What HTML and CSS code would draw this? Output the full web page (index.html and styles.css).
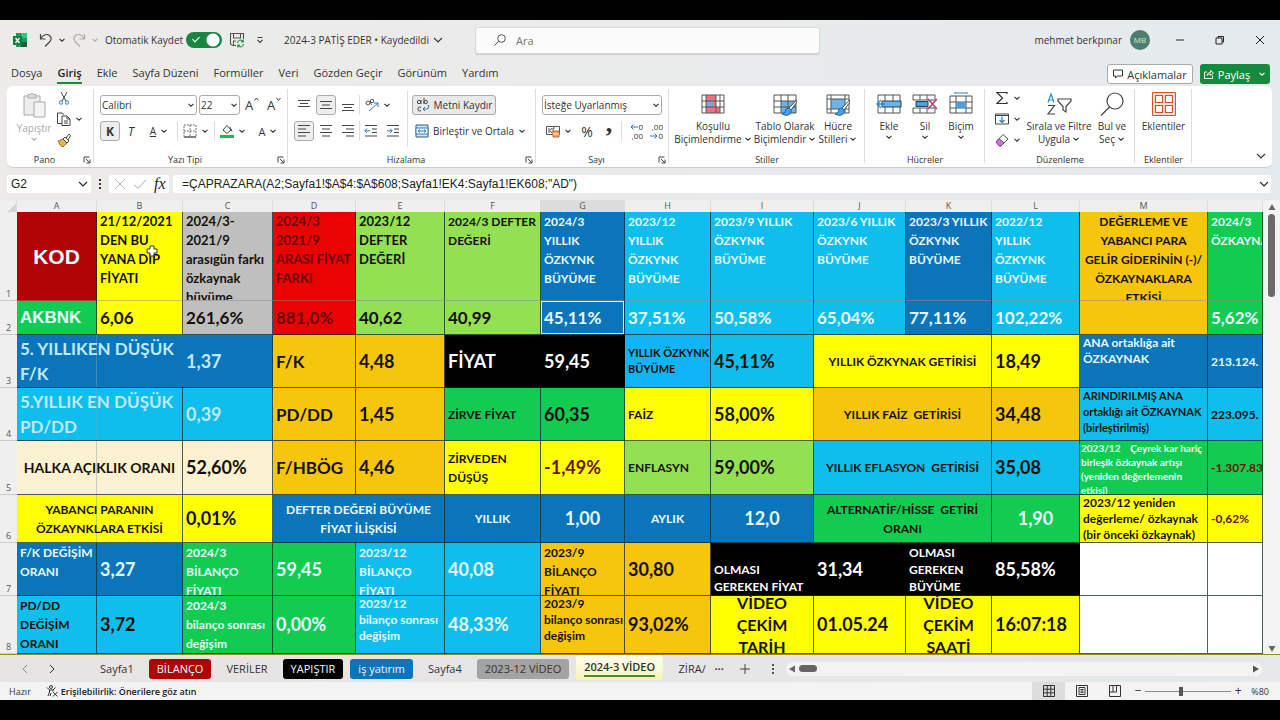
FILE: index.html
```html
<!DOCTYPE html>
<html lang="tr">
<head>
<meta charset="utf-8">
<title>2024-3 PATİŞ EDER</title>
<link rel="stylesheet" href="styles.css">
</head>
<body>
<svg class="defs" aria-hidden="true">
  <symbol id="chev" viewBox="0 0 8 8"><path d="M1.5 2.8 4 5.2 6.500 2.800" fill="none" stroke="currentColor" stroke-width="1.1"/></symbol>
  <symbol id="chevL" viewBox="0 0 10 10"><path d="M1 3l4 4 4-4" fill="none" stroke="currentColor" stroke-width="1.100"/></symbol>
  <symbol id="launch" viewBox="0 0 8 8"><path d="M1 6.500V1h5.500M3 3l4 4M7 3.500V7H3.500" fill="none" stroke="#444" stroke-width="1"/></symbol>
</svg>

<div class="app">
<header class="titlebar">
  <svg class="i16" viewBox="0 0 16 16"><path d="M4 1h11v14H4z" fill="#1f9a5a"/><path d="M9 1h6v5H9z" fill="#33c481"/><path d="M9 10h6v5H9z" fill="#14633a"/><path d="M1 4h9v9H1z" fill="#107c41"/><path d="M3.500 6l4 5M7.500 6l-4 5" stroke="#fff" stroke-width="1.300"/></svg>
  <button class="ib undo" aria-label="Geri al"><svg class="i16" viewBox="0 0 16 16"><path d="M2.500 2v5h5M2.800 6.500C5 2.500 9 1.500 11.500 3.500c3 2.500 1.500 5-.5 7L7 14.500" fill="none" stroke="#444" stroke-width="1.200"/></svg><svg class="i8"><use href="#chev"/></svg></button>
  <button class="ib faded redo" aria-label="Yinele"><svg class="i16" viewBox="0 0 16 16"><path d="M13.500 2v5h-5M13.200 6.500C11 2.500 7 1.500 4.500 3.500c-3 2.500-1.500 5 .5 7L9 14.500" fill="none" stroke="#aaa" stroke-width="1.200"/></svg><svg class="i8"><use href="#chev"/></svg></button>
  <label class="autosave">Otomatik Kaydet <input type="checkbox" class="switch" checked></label>
  <button class="ib save" aria-label="Kaydet"><svg class="i16" viewBox="0 0 16 16"><path d="M7 13.500H3.500L1.500 12V1.500h13V7M4.500 1.500V6h7V1.500M4.500 13.500V9H7" fill="none" stroke="#555" stroke-width="1.100"/><path d="M8.500 11a3 3 0 0 1 5.500-1.500M14.300 7.500v2.300H12M14.500 12A3 3 0 0 1 9 13.500M8.700 15.500v-2.300H11" fill="none" stroke="#2a9a50" stroke-width="1.200"/></svg></button>
  <button class="ib qat" aria-label="Araç çubuğunu özelleştir"><svg class="i8" viewBox="0 0 8 8"><path d="M1.500 1.500h5M1.500 4 4 6.500 6.500 4" fill="none" stroke="#444" stroke-width="1.100"/></svg></button>
  <button class="ib docname">2024-3 PATİŞ EDER • Kaydedildi <svg class="i10"><use href="#chevL"/></svg></button>
  <label class="search"><svg class="i12" viewBox="0 0 12 12"><circle cx="7.500" cy="4.500" r="3.800" fill="none" stroke="#555"/><path d="M4.800 7.200.5 11.500" stroke="#555"/></svg><input type="text" placeholder="Ara" aria-label="Ara"></label>
  <div class="user">mehmet berkpınar <span class="avatar">MB</span></div>
  <button class="ib win" aria-label="Simge durumuna küçült"><svg class="i10" viewBox="0 0 10 10"><path d="M1 5h8" stroke="#222"/></svg></button>
  <button class="ib win" aria-label="Geri yükle"><svg class="i10" viewBox="0 0 10 10"><path d="M1 3h6v6H1zM3 3V1.500h5.500V7H7" fill="none" stroke="#222"/></svg></button>
  <button class="ib win" aria-label="Kapat"><svg class="i10" viewBox="0 0 10 10"><path d="M1 1l8 8M9 1 1 9" stroke="#222"/></svg></button>
</header>

<nav class="tabs">
  <a href="#">Dosya</a><a href="#" class="on">Giriş</a><a href="#">Ekle</a><a href="#">Sayfa Düzeni</a><a href="#">Formüller</a><a href="#">Veri</a><a href="#">Gözden Geçir</a><a href="#">Görünüm</a><a href="#">Yardım</a>
  <button class="comments"><svg class="i10" viewBox="0 0 10 10"><path d="M.5 1h9v6H4.500L2.500 9V7h-2z" fill="none" stroke="#333"/></svg>Açıklamalar</button>
  <button class="share"><svg class="i10" viewBox="0 0 10 10"><path d="M3 3H.5v6.500h8V6.500M3 6.500c.3-2 1.500-3 3.500-3V1.500L9.500 4 6.500 6.300V5C5 5 4 5.500 3 6.500z" fill="none" stroke="#fff" stroke-width=".9"/></svg>Paylaş<svg class="i8"><use href="#chev"/></svg></button>
</nav>

<section class="ribbon">
  <div class="grp g-pano">
    <div class="body">
      <button class="big faded"><svg class="paste" viewBox="0 0 24 26"><path d="M2 4h16v19H2z" fill="#eee" stroke="#aaa"/><path d="M6 2.500h2.500Q10 0 11.500 2.500H14V6H6z" fill="#ddd" stroke="#aaa"/><path d="M12 10h11v15H12z" fill="#f4f4f4" stroke="#aaa"/></svg><span>Yapıştır</span><svg class="i8"><use href="#chev"/></svg></button>
      <div class="stack">
        <button class="ib" aria-label="Kes"><svg class="i14" viewBox="0 0 14 14"><path d="M4 1l5 9M10 1 5 10" stroke="#444" fill="none"/><circle cx="4" cy="11.500" r="1.700" fill="none" stroke="#2a7ab8"/><circle cx="10" cy="11.500" r="1.700" fill="none" stroke="#2a7ab8"/></svg></button>
        <button class="ib" aria-label="Kopyala"><svg class="i14" viewBox="0 0 14 14"><path d="M5 11.500H.5V1H5l2 1.500M5 4h5l3 3v6.500H5zM10 4v3h3M7 9h4M7 11h4" fill="none" stroke="#444"/></svg><svg class="i8"><use href="#chev"/></svg></button>
        <button class="ib" aria-label="Biçim boyacısı"><svg class="i14" viewBox="0 0 14 14"><path d="M1 8l5-2 4 4-4 4q-3-1-5-6z" fill="#f0b050" stroke="#a66a20"/><path d="M6 6l2-2 4 4-2 2zM9 5l3-4 1.500 1.500L11 7" fill="#fff" stroke="#444"/></svg></button>
      </div>
    </div>
    <div class="cap">Pano<svg class="i8"><use href="#launch"/></svg></div>
  </div>

  <div class="grp g-font">
    <div class="body rows">
      <div class="row">
        <span class="sel w97"><select aria-label="Yazı tipi"><option>Calibri</option></select><svg class="i8"><use href="#chev"/></svg></span>
        <span class="sel w41"><select aria-label="Yazı boyutu"><option>22</option></select><svg class="i8"><use href="#chev"/></svg></span>
        <button class="ib w22 lat" aria-label="Yazı tipini büyüt">A<svg class="i8 hat" viewBox="0 0 8 8"><path d="M1.500 4.500 3.500 2l2 2.500" fill="none" stroke="#444"/></svg></button>
        <button class="ib w22 lat" aria-label="Yazı tipini küçült">A<svg class="i8 hat" viewBox="0 0 8 8"><path d="M1.500 2l2 2.500 2-2.500" fill="none" stroke="#444"/></svg></button>
      </div>
      <div class="row">
        <button class="ib box bold">K</button>
        <button class="ib w22 ital">T</button>
        <button class="ib w34"><u>A</u><svg class="i8"><use href="#chev"/></svg></button>
        <i class="sep"></i>
        <button class="ib w34" aria-label="Kenarlıklar"><svg class="i14" viewBox="0 0 14 14"><path d="M1 1h12v12H1zM7 1v12M1 7h12" fill="none" stroke="#777" stroke-dasharray="2 1"/><path d="M1 13h12" stroke="#333"/></svg><svg class="i8"><use href="#chev"/></svg></button>
        <i class="sep"></i>
        <button class="ib w34" aria-label="Dolgu rengi"><svg class="i14" viewBox="0 0 14 14"><path d="M3 6l4-4.500L11 6l-4 3.500zM10 3l2 4.500" fill="none" stroke="#444"/><path d="M0 11h14v3H0z" fill="#1db954"/></svg><svg class="i8"><use href="#chev"/></svg></button>
        <button class="ib w34 fc">A<svg class="i8"><use href="#chev"/></svg></button>
      </div>
    </div>
    <div class="cap">Yazı Tipi<svg class="i8"><use href="#launch"/></svg></div>
  </div>

  <div class="grp g-align">
    <div class="body">
      <div class="rows">
        <div class="row">
          <button class="ib box ghost" aria-label="Üste hizala"><svg class="i14" viewBox="0 0 14 14"><path d="M1 2.500h12M3 5.500h8M1 8.500h12" stroke="#444"/></svg></button>
          <button class="ib box" aria-label="Ortaya hizala"><svg class="i14" viewBox="0 0 14 14"><path d="M1 3.500h12M3 7h8M1 10.500h12" stroke="#444"/></svg></button>
          <button class="ib box ghost" aria-label="Alta hizala"><svg class="i14" viewBox="0 0 14 14"><path d="M1 6.500h12M3 9.500h8M1 12.500h12" stroke="#444"/></svg></button>
          <i class="sep"></i>
          <button class="ib w34" aria-label="Yönlendirme"><svg class="i14" viewBox="0 0 14 14"><circle cx="3" cy="5" r="2" fill="none" stroke="#555"/><path d="M4 3l3 4" stroke="#555"/><circle cx="7" cy="3" r="1.700" fill="none" stroke="#555"/><path d="M4 13l9-8M13 9V5H9" stroke="#2a7ab8" fill="none"/></svg><svg class="i8"><use href="#chev"/></svg></button>
        </div>
        <div class="row">
          <button class="ib box" aria-label="Sola hizala"><svg class="i14" viewBox="0 0 14 14"><path d="M1 1.500h12M1 5h8M1 8.500h12M1 12h8" stroke="#444"/></svg></button>
          <button class="ib box ghost" aria-label="Ortala"><svg class="i14" viewBox="0 0 14 14"><path d="M1 1.500h12M3 5h8M1 8.500h12M3 12h8" stroke="#444"/></svg></button>
          <button class="ib box ghost" aria-label="Sağa hizala"><svg class="i14" viewBox="0 0 14 14"><path d="M1 1.500h12M5 5h8M1 8.500h12M5 12h8" stroke="#444"/></svg></button>
          <i class="sep"></i>
          <button class="ib box ghost" aria-label="Girintiyi azalt"><svg class="i14" viewBox="0 0 14 14"><path d="M1 1.500h12M8 5h5M8 8.500h5M1 12h12" stroke="#444"/><path d="M6 6.800H1M3 4.500.8 6.800 3 9" stroke="#2a7ab8" fill="none"/></svg></button>
          <button class="ib box ghost" aria-label="Girintiyi artır"><svg class="i14" viewBox="0 0 14 14"><path d="M1 1.500h12M8 5h5M8 8.500h5M1 12h12" stroke="#444"/><path d="M1 6.800h5M4 4.500l2.200 2.300L4 9" stroke="#2a7ab8" fill="none"/></svg></button>
        </div>
      </div>
      <i class="sep tall"></i>
      <div class="rows">
        <div class="row"><button class="ib box wide"><svg class="i14" viewBox="0 0 14 14"><circle cx="3" cy="4" r="1.700" fill="none" stroke="#444"/><path d="M5 2v4M8 0v6M5 9.500Q2 8 2 11t3 1.500" fill="none" stroke="#444"/><circle cx="9.700" cy="4" r="1.700" fill="none" stroke="#444"/><path d="M12.500 7v2q0 2-2 2H7M9 9l-2 2 2 2" stroke="#2a7ab8" fill="none"/></svg>Metni Kaydır</button></div>
        <div class="row"><button class="ib pad"><svg class="i14" viewBox="0 0 14 14"><path d="M1 1h12v12H1z" fill="#cfe6f5" stroke="#456"/><path d="M1 4h12v6H1z" fill="#fff" stroke="#2a7ab8"/><path d="M3 7h8M5 5.500 3 7l2 1.500M9 5.500 11 7 9 8.500" fill="none" stroke="#2a7ab8"/></svg>Birleştir ve Ortala<svg class="i8"><use href="#chev"/></svg></button></div>
      </div>
    </div>
    <div class="cap">Hizalama<svg class="i8"><use href="#launch"/></svg></div>
  </div>

  <div class="grp g-num">
    <div class="body rows">
      <div class="row"><span class="sel w120"><select aria-label="Sayı biçimi"><option>İsteğe Uyarlanmış</option></select><svg class="i8"><use href="#chev"/></svg></span></div>
      <div class="row">
        <button class="ib w34" aria-label="Finansal sayı biçimi"><svg class="i14" viewBox="0 0 14 14"><path d="M.5 2.500h13v8H.5z" fill="none" stroke="#555"/><path d="M3 4v5M6 4 4 6.500 6 9M9 4H7v5h2" stroke="#555" fill="none"/><path d="M7 7h6v6H7z" fill="#f0a060" stroke="#d06820"/><path d="M7 10h6" stroke="#fff"/></svg><svg class="i8"><use href="#chev"/></svg></button>
        <button class="ib w22 pct">%</button>
        <button class="ib w22 comma">,</button>
        <i class="sep"></i>
        <button class="ib dec" aria-label="Ondalık artır"><span class="up"><svg class="i8" viewBox="0 0 8 8"><path d="M8 4H1M3.500 1.500 1 4l2.500 2.500" fill="none" stroke="#2a7ab8"/></svg>0</span><span>,00</span></button>
        <button class="ib dec" aria-label="Ondalık azalt"><span>,00</span><span class="up"><svg class="i8" viewBox="0 0 8 8"><path d="M0 4h7M4.500 1.500 7 4 4.500 6.500" fill="none" stroke="#2a7ab8"/></svg>0</span></button>
      </div>
    </div>
    <div class="cap">Sayı<svg class="i8"><use href="#launch"/></svg></div>
  </div>

  <div class="grp g-style">
    <div class="body">
      <button class="big"><svg class="i24" viewBox="0 0 24 24"><path d="M1 3h22v18H1z" fill="#fff"/><path d="M5 3h10v6H5zM5 15h14v6H5z" fill="#f47080"/><path d="M5 9h7v6H5z" fill="#7aa8d8"/><path d="M12 9h3v6h-3z" fill="#f47080"/><path d="M1 3h22v18H1zM1 9h22M1 15h22M5 3v18M15 3v18M19 3v18" fill="none" stroke="#555"/></svg><span>Koşullu<br>Biçimlendirme<svg class="i8"><use href="#chev"/></svg></span></button>
      <button class="big"><svg class="i24" viewBox="0 0 24 24"><path d="M1 3h22v18H1z" fill="#fff"/><path d="M8 9h15v12H8z" fill="#6ab4ea"/><path d="M1 3h22v18H1zM1 9h22M1 15h22M8 3v18M15 3v18" fill="none" stroke="#555"/><path d="M23.500 8 16 16l2 2 6-8z" fill="#fff" stroke="#444"/><path d="M16 16q-4 0-4 4-1 2-3 2 5 3 8 0 2-2 1-4z" fill="#4aa0e0" stroke="#1f6ca8"/></svg><span>Tablo Olarak<br>Biçimlendir<svg class="i8"><use href="#chev"/></svg></span></button>
      <button class="big"><svg class="i24" viewBox="0 0 24 24"><path d="M1 3h22v18H1z" fill="#fff"/><path d="M5 7h14v10H5z" fill="#6ab4ea"/><path d="M1 3h22v18H1zM1 7h22M1 17h22M5 3v18M19 3v18" fill="none" stroke="#555"/><path d="M23.500 8 16 16l2 2 6-8z" fill="#fff" stroke="#444"/><path d="M16 16q-4 0-4 4-1 2-3 2 5 3 8 0 2-2 1-4z" fill="#4aa0e0" stroke="#1f6ca8"/></svg><span>Hücre<br>Stilleri<svg class="i8"><use href="#chev"/></svg></span></button>
    </div>
    <div class="cap">Stiller</div>
  </div>

  <div class="grp g-cells">
    <div class="body">
      <button class="big"><svg class="i26" viewBox="0 0 26 24"><path d="M2 3h22v18H2z" fill="#fff"/><path d="M2 3h22v18H2zM9 3v18M17 3v18" fill="none" stroke="#555"/><path d="M6 9h19v6H6z" fill="#6ab4ea" stroke="#245"/><path d="M9 12H1M5 8l-4 4 4 4" fill="none" stroke="#2f86c8" stroke-width="1.400"/></svg><span>Ekle</span><svg class="i8"><use href="#chev"/></svg></button>
      <button class="big"><svg class="i26" viewBox="0 0 26 24"><path d="M1 3h22v5H1zM1 16h22v5H1zM8 3v5M15 3v5M8 16v5M15 16v5" fill="#fff" stroke="#555"/><path d="M4 9.500h12v5H4z" fill="#4a9fe0" stroke="#245"/><path d="M16 7l9 10M25 7l-9 10" stroke="#b8326a" stroke-width="1.300"/></svg><span>Sil</span><svg class="i8"><use href="#chev"/></svg></button>
      <button class="big"><svg class="i26" viewBox="0 0 26 24"><path d="M7 1h12M7-1v3M19-1v3" stroke="#2f86c8"/><path d="M2 4h22v17H2zM2 10h22M2 16h22M8 4v17M18 4v17" fill="#fff" stroke="#555"/><path d="M8 10h10v6H8z" fill="#4a9fe0"/></svg><span>Biçim</span><svg class="i8"><use href="#chev"/></svg></button>
    </div>
    <div class="cap">Hücreler</div>
  </div>

  <div class="grp g-edit">
    <div class="body">
      <div class="stack">
        <button class="ib" aria-label="Otomatik toplam"><svg class="i14" viewBox="0 0 14 14"><path d="M12 3V1.500H2L7.500 7 2 12.500h10V11" fill="none" stroke="#333" stroke-width="1.200"/></svg><svg class="i8"><use href="#chev"/></svg></button>
        <button class="ib" aria-label="Dolgu"><svg class="i14" viewBox="0 0 14 14"><path d="M.5 2h13v10H.5zM.5 3.500h13" fill="none" stroke="#444"/><path d="M7 4.500V10M4.500 8 7 10.500 9.500 8" fill="none" stroke="#2a7ab8" stroke-width="1.200"/></svg><svg class="i8"><use href="#chev"/></svg></button>
        <button class="ib" aria-label="Temizle"><svg class="i14" viewBox="0 0 14 14"><path d="M1 9l7-7.500L13 6l-7 7H4.500z" fill="#fff" stroke="#555"/><path d="M1 9l3-3.500L9 10l-3 3H4.500z" fill="#c878d0" stroke="#8a3a98"/></svg><svg class="i8"><use href="#chev"/></svg></button>
      </div>
      <button class="big"><svg class="i26" viewBox="0 0 26 24"><path d="M2 10.500 5 2l3 8.500M3 8h4" fill="none" stroke="#2a8ac8" stroke-width="1.200"/><path d="M2 13.500h6.500L2 22h7" fill="none" stroke="#444" stroke-width="1.200"/><path d="M12 7h13v2l-5 5.500V20l-3-2v-3.500L12 9z" fill="none" stroke="#444" stroke-width="1.200"/></svg><span>Sırala ve Filtre<br>Uygula<svg class="i8"><use href="#chev"/></svg></span></button>
      <button class="big"><svg class="i26" viewBox="0 0 26 24"><circle cx="16" cy="9" r="8" fill="none" stroke="#444" stroke-width="1.200"/><path d="M10.500 15 2 23.500" stroke="#444" stroke-width="1.200"/></svg><span>Bul ve<br>Seç<svg class="i8"><use href="#chev"/></svg></span></button>
    </div>
    <div class="cap">Düzenleme</div>
  </div>

  <div class="grp g-add">
    <div class="body">
      <button class="big"><svg class="i26" viewBox="0 0 26 24"><path d="M1.500.5h23v23h-23z" fill="#fbe3da" stroke="#d2522c"/><path d="M4.500 3.500h7v7h-7zM14.500 3.500h7v7h-7zM4.500 13.500h7v7h-7zM14.500 13.500h7v7h-7z" fill="#fff" stroke="#d2522c" stroke-width="1.200"/></svg><span>Eklentiler</span></button>
    </div>
    <div class="cap">Eklentiler</div>
  </div>
  <button class="ib collapse" aria-label="Şeridi daralt"><svg class="i10"><use href="#chevL"/></svg></button>
</section>

<section class="fbar">
  <label class="namebox"><input type="text" value="G2" aria-label="Ad kutusu"><svg class="i10"><use href="#chevL"/></svg></label>
  <svg class="dots" viewBox="0 0 4 12"><path d="M1 1h2v2H1zM1 5h2v2H1zM1 9h2v2H1z" fill="#333"/></svg>
  <div class="fx"><svg class="i12" viewBox="0 0 12 12"><path d="M1 1l10 10M11 1 1 11" stroke="#bbb"/></svg><svg class="i12" viewBox="0 0 12 12"><path d="M0 6.500 4 10.500 12 2" stroke="#aaa" fill="none"/></svg><em>fx</em></div>
  <label class="formula"><input type="text" aria-label="Formül" value="=ÇAPRAZARA(A2;Sayfa1!$A$4:$A$608;Sayfa1!EK4:Sayfa1!EK608;&quot;AD&quot;)"><svg class="i10"><use href="#chevL"/></svg></label>
</section>

<main class="sheet">
<table class="grid">
<colgroup><col class="c0"><col class="ca"><col class="cb"><col class="cc"><col class="cd"><col class="ce"><col class="cf"><col class="cg"><col class="ch"><col class="ci"><col class="cj"><col class="ck"><col class="cl"><col class="cm"><col></colgroup>
<thead><tr><th class="corner"></th><th>A</th><th>B</th><th>C</th><th>D</th><th>E</th><th>F</th><th class="cur">G</th><th>H</th><th>I</th><th>J</th><th>K</th><th>L</th><th>M</th><th></th></tr></thead>
<tbody>
<tr class="r1"><th>1</th>
<td class="dred w mid ctr kod"><div>KOD</div></td>
<td class="yel lg"><div>21/12/2021<br>DEN BU<br>YANA DİP<br>FİYATI</div><svg class="cursor" viewBox="0 0 12 12"><path d="M4 1h4v3h3v4H8v3H4V8H1V4h3z" fill="#fff" stroke="#333"/></svg></td>
<td class="gry lg"><div>2024/3-<br>2021/9<br>arasıgün farkı<br>özkaynak<br>büyüme</div></td>
<td class="red lg"><div>2024/3<br>2021/9<br>ARASI FİYAT<br>FARKI</div></td>
<td class="lime lg"><div>2023/12<br>DEFTER<br>DEĞERİ</div></td>
<td class="lime"><div>2024/3 DEFTER<br>DEĞERİ</div></td>
<td class="blu w"><div>2024/3<br>YILLIK<br>ÖZKYNK<br>BÜYÜME</div></td>
<td class="cya w"><div>2023/12<br>YILLIK<br>ÖZKYNK<br>BÜYÜME</div></td>
<td class="cya w"><div>2023/9 YILLIK<br>ÖZKYNK<br>BÜYÜME</div></td>
<td class="cya w"><div>2023/6 YILLIK<br>ÖZKYNK<br>BÜYÜME</div></td>
<td class="blu w"><div>2023/3 YILLIK<br>ÖZKYNK<br>BÜYÜME</div></td>
<td class="cya w"><div>2022/12<br>YILLIK<br>ÖZKYNK<br>BÜYÜME</div></td>
<td class="gld ctr"><div>DEĞERLEME VE<br>YABANCI PARA<br>GELİR GİDERİNİN (-)/<br>ÖZKAYNAKLARA<br>ETKİSİ</div></td>
<td class="grn w"><div>2024/3<br>ÖZKAYNAK</div></td></tr>

<tr class="r2 mid n17"><th>2</th>
<td class="grn w akb"><div>AKBNK</div></td><td class="yel"><div>6,06</div></td><td class="gry"><div>261,6%</div></td><td class="red"><div>881,0%</div></td><td class="lime"><div>40,62</div></td><td class="lime"><div>40,99</div></td><td class="blu w picked"><div>45,11%</div></td><td class="cya w"><div>37,51%</div></td><td class="cya w"><div>50,58%</div></td><td class="cya w"><div>65,04%</div></td><td class="blu w"><div>77,11%</div></td><td class="cya w"><div>102,22%</div></td><td class="gld"><div></div></td><td class="grn w"><div>5,62%</div></td></tr>

<tr class="r3 mid n18"><th>3</th>
<td colspan="2" class="blu ice frz nb up17"><div>5. YILLIKEN DÜŞÜK<br>F/K</div></td><td class="blu ice"><div>1,37</div></td><td class="gld up17"><div>F/K</div></td><td class="gld"><div>4,48</div></td><td class="blk w"><div>FİYAT</div></td><td class="blk w"><div>59,45</div></td><td class="sky t11"><div>YILLIK ÖZKYNK<br>BÜYÜME</div></td><td class="cya"><div>45,11%</div></td><td colspan="2" class="yel t13 ctr"><div>YILLIK ÖZKYNAK GETİRİSİ</div></td><td class="yel"><div>18,49</div></td><td class="blu w t12 top"><div>ANA ortaklığa ait<br>ÖZKAYNAK</div></td><td class="blu w t13"><div>213.124.</div></td></tr>

<tr class="r4 mid n18"><th>4</th>
<td colspan="2" class="cya ice frz up17"><div>5.YILLIK EN DÜŞÜK<br>PD/DD</div></td><td class="cya ice"><div>0,39</div></td><td class="gld up17"><div>PD/DD</div></td><td class="gld"><div>1,45</div></td><td class="grn t13"><div>ZİRVE FİYAT</div></td><td class="grn"><div>60,35</div></td><td class="yel t13"><div>FAİZ</div></td><td class="yel"><div>58,00%</div></td><td colspan="2" class="gld t13 ctr"><div>YILLIK FAİZ&nbsp; GETİRİSİ</div></td><td class="gld"><div>34,48</div></td><td class="cya t11 top"><div>ARINDIRILMIŞ ANA<br>ortaklığı ait ÖZKAYNAK<br>(birleştirilmiş)</div></td><td class="cya t13"><div>223.095.</div></td></tr>

<tr class="r5 mid n18"><th>5</th>
<td colspan="2" class="crm frz t14 ctr"><div>HALKA AÇIKLIK ORANI</div></td><td class="crm"><div>52,60%</div></td><td class="gld up17"><div>F/HBÖG</div></td><td class="gld"><div>4,46</div></td><td class="yel t13"><div>ZİRVEDEN<br>DÜŞÜŞ</div></td><td class="yel neg"><div>-1,49%</div></td><td class="lime t13"><div>ENFLASYN</div></td><td class="lime"><div>59,00%</div></td><td colspan="2" class="cya t13 ctr"><div>YILLIK EFLASYON&nbsp; GETİRİSİ</div></td><td class="cya"><div>35,08</div></td><td class="grn w t10 top"><div>2023/12 &nbsp;&nbsp; Çeyrek kar hariç<br>birleşik özkaynak artışı<br>(yeniden değerlemenin<br>etkisi)</div></td><td class="grn neg t13"><div>-1.307.83</div></td></tr>

<tr class="r6 mid n18"><th>6</th>
<td colspan="2" class="yel frz t13 ctr"><div>YABANCI PARANIN<br>ÖZKAYNKLARA ETKİSİ</div></td><td class="yel"><div>0,01%</div></td><td colspan="2" class="blu w t13 ctr"><div>DEFTER DEĞERİ BÜYÜME<br>FİYAT İLİŞKİSİ</div></td><td class="blu w t13 ctr"><div>YILLIK</div></td><td class="blu w ctr"><div>1,00</div></td><td class="blu w t13 ctr"><div>AYLIK</div></td><td class="blu w ctr"><div>12,0</div></td><td colspan="2" class="grn t13 ctr"><div>ALTERNATİF/HİSSE&nbsp; GETİRİ<br>ORANI</div></td><td class="grn w ctr"><div>1,90</div></td><td class="yel t12"><div>2023/12 yeniden<br>değerleme/ özkaynak<br>(bir önceki özkaynak)</div></td><td class="yel neg t13"><div>-0,62%</div></td></tr>

<tr class="r7 mid n18"><th>7</th>
<td class="blu w t13 top"><div>F/K DEĞİŞİM<br>ORANI</div></td><td class="blu w"><div>3,27</div></td><td class="grn w t13 top"><div>2024/3<br>BİLANÇO<br>FİYATI</div></td><td class="grn w"><div>59,45</div></td><td class="cya w t13 top"><div>2023/12<br>BİLANÇO<br>FİYATI</div></td><td class="cya w"><div>40,08</div></td><td class="gld t13 top"><div>2023/9<br>BİLANÇO<br>FİYATI</div></td><td class="gld"><div>30,80</div></td><td class="blk w t13 t17 bot"><div>OLMASI<br>GEREKEN FİYAT</div></td><td class="blk w"><div>31,34</div></td><td class="blk w t13 t17 bot"><div>OLMASI<br>GEREKEN<br>BÜYÜME</div></td><td class="blk w"><div>85,58%</div></td><td class="wht"><div></div></td><td class="wht"><div></div></td></tr>

<tr class="r8 mid n18"><th>8</th>
<td class="cya t13"><div>PD/DD<br>DEĞİŞİM<br>ORANI</div></td><td class="cya"><div>3,72</div></td><td class="grn w t13"><div>2024/3<br>bilanço sonrası<br>değişim</div></td><td class="grn w"><div>0,00%</div></td><td class="cya w t12 top"><div>2023/12<br>bilanço sonrası<br>değişim</div></td><td class="cya w"><div>48,33%</div></td><td class="gld t12 top"><div>2023/9<br>bilanço sonrası<br>değişim</div></td><td class="gld"><div>93,02%</div></td><td class="yel ctr vid"><div>VİDEO<br>ÇEKİM<br>TARİH</div></td><td class="yel"><div>01.05.24</div></td><td class="yel ctr vid"><div>VİDEO<br>ÇEKİM<br>SAATİ</div></td><td class="yel"><div>16:07:18</div></td><td class="wht"><div></div></td><td class="wht"><div></div></td></tr>
</tbody>
</table>
<div class="vscroll"><svg class="i8" viewBox="0 0 8 8"><path d="M4 1l3.500 6h-7z" fill="#666"/></svg><i></i><svg class="i8" viewBox="0 0 8 8"><path d="M4 7 .5 1h7z" fill="#666"/></svg></div>
</main>

<nav class="sheets">
  <button class="ib arrow" aria-label="Önceki"><svg class="i10" viewBox="0 0 10 10"><path d="M7 1 3 5l4 4" fill="none" stroke="#888"/></svg></button>
  <button class="ib arrow" aria-label="Sonraki"><svg class="i10" viewBox="0 0 10 10"><path d="M3 1l4 4-4 4" fill="none" stroke="#333"/></svg></button>
  <button class="st s1">Sayfa1</button><button class="st dred w">BİLANÇO</button><button class="st">VERİLER</button><button class="st blk w">YAPIŞTIR</button><button class="st blu w">iş yatırım</button><button class="st">Sayfa4</button><button class="st mgry">2023-12 VİDEO</button><button class="st active"><span>2024-3 VİDEO</span></button><button class="st last">ZİRA/</button>
  <button class="ib more" aria-label="Diğer sayfalar">•••</button>
  <button class="ib plus" aria-label="Yeni sayfa"><svg class="i10" viewBox="0 0 10 10"><path d="M5 0v10M0 5h10" stroke="#444"/></svg></button>
  <svg class="dots" viewBox="0 0 4 12"><path d="M1 1h2v2H1zM1 5h2v2H1zM1 9h2v2H1z" fill="#555"/></svg>
  <div class="hscroll"><svg class="i8" viewBox="0 0 8 8"><path d="M1 4l6-3.500v7z" fill="#666"/></svg><i></i><svg class="i8" viewBox="0 0 8 8"><path d="M7 4 1 .5v7z" fill="#555"/></svg></div>
</nav>

<footer class="status">
  <span class="ready">Hazır</span>
  <svg class="i12" viewBox="0 0 12 12"><circle cx="5" cy="2" r="1.500" fill="none" stroke="#333"/><path d="M1 2.500 3.500 5v2L2 11M9.500 2.500 7 5v1.500M3.500 5H7M5 8l-1 3M7 7l4.500 4.500M11.500 7 7 11.500" fill="none" stroke="#333"/></svg>
  <b>Erişilebilirlik: Önerilere göz atın</b>
  <div class="views">
    <button class="ib on" aria-label="Normal"><svg class="i12" viewBox="0 0 12 12"><path d="M.5.5h11v11H.5zM4.200.5v11M7.800.5v11M.5 4.200h11M.5 7.800h11" fill="none" stroke="#333"/></svg></button>
    <button class="ib" aria-label="Sayfa düzeni"><svg class="i12" viewBox="0 0 12 12"><path d="M.5.5h11v11H.5zM3 2.500h6v7H3zM4.500 4.500h3M4.500 6h3M4.500 7.500h3" fill="none" stroke="#333"/></svg></button>
    <button class="ib" aria-label="Sayfa sonu önizleme"><svg class="i12" viewBox="0 0 12 12"><path d="M.5.500h11v11H.500zM.500 7h7V.500M4 .500V7" fill="none" stroke="#333"/></svg></button>
  </div>
  <button class="ib zb" aria-label="Uzaklaştır">−</button><input type="range" class="zoom" min="10" max="180" value="80" aria-label="Yakınlaştırma"><button class="ib zb" aria-label="Yakınlaştır">+</button>
  <span class="pc">%80</span>
</footer>
</div>
</body>
</html>
```

FILE: styles.css
```css
* { box-sizing: border-box; }
body { margin: 0; background: #000; font-family: "Open Sans", "Noto Sans", sans-serif; font-size: 11px; color: #333; }
button, input, select { font: inherit; color: inherit; margin: 0; padding: 0; border: 0; background: none; }
svg { flex: none; display: block; }
.defs { width: 0; height: 0; position: absolute; }
.app { padding: 20px 0; }
.i8 { width: 8px; height: 8px; }
.i10 { width: 10px; height: 10px; }
.i12 { width: 12px; height: 12px; }
.i14 { width: 14px; height: 14px; }
.i16 { width: 16px; height: 16px; }
.i24 { width: 24px; height: 24px; }
.i26 { width: 26px; height: 24px; }
.ib { display: flex; align-items: center; justify-content: center; gap: 4px; white-space: nowrap; }
.faded { color: #aaa; }

/* title bar */
.titlebar { height: 40px; display: flex; align-items: center; padding: 0 0 0 12px; font-size: 10px; background: linear-gradient(90deg, #edebe7, #e9ebeb 50%, #e5eaee); }
.undo { margin-left: 10px; }
.redo { margin-left: 5px; }
.autosave { display: flex; align-items: center; gap: 3px; margin-left: 6px; white-space: nowrap; }
.switch { appearance: none; width: 36px; height: 16px; border-radius: 8px; background: radial-gradient(circle at 27px 8px, #fff 6px, transparent 7px), #1a8444; position: relative; }
.switch::after { content: ""; position: absolute; left: 8px; top: 3px; width: 3px; height: 6px; border: solid #fff; border-width: 0 1px 1px 0; transform: rotate(45deg); }
.save { margin-left: 7px; }
.qat { margin-left: 11px; }
.docname { margin-left: 20px; }
.search { flex: 0 1 345px; height: 27px; margin-left: 32px; display: flex; align-items: center; gap: 10px; padding-left: 18px; background: #fbfbfb; border: 1px solid #d8d8d8; border-radius: 3px; box-shadow: 0 1px 1px #ccc; }
.search input { width: 100%; font-size: 11px; outline: 0; }
.user { margin-left: auto; display: flex; align-items: center; gap: 8px; white-space: nowrap; }
.avatar { width: 20px; height: 20px; border-radius: 50%; background: #4d7d6d; color: #d8ebe2; font-size: 8px; line-height: 20px; text-align: center; }
.win { width: 40px; height: 26px; }
.user + .win { margin-left: 10px; }

/* ribbon tabs */
.tabs { height: 26px; display: flex; align-items: center; padding: 2px 10px 0 11px; gap: 15px; background: linear-gradient(90deg, #edebe7, #e9ebeb 50%, #e5eaee); }
.tabs a { color: #333; text-decoration: none; line-height: 18px; border-bottom: 2px solid transparent; white-space: nowrap; }
.tabs a.on { font-weight: 600; color: #222; border-color: #1a8444; }
.comments, .share { height: 20px; display: flex; align-items: center; justify-content: center; gap: 4px; border-radius: 3px; white-space: nowrap; }
.comments { width: 86px; margin-left: auto; background: #fff; border: 1px solid #aaa; }
.share { width: 70px; margin-left: -8px; background: #168a3c; color: #fff; }
.share .i8 { margin-left: 4px; }

/* ribbon */
.ribbon { height: 82px; margin: 0; padding: 0 8px 0 7px; display: flex; background: linear-gradient(90deg, #edebe7, #e9ebeb 50%, #e5eaee); font-size: 10px; }
.grp { height: 82px; padding: 5px 0 1px 6px; background: #fff; display: flex; flex-direction: column; justify-content: space-between; border-bottom: 1px solid #ccc; flex: none; position: relative; }
.grp::after { content: ""; position: absolute; right: 0; top: 3px; bottom: 4px; width: 1px; background: #ddd; }
.g-pano { width: 87px; border-radius: 6px 0 0 6px; }
.g-font { width: 194px; }
.g-align { width: 248px; }
.g-num { width: 133px; }
.g-style { width: 196px; }
.g-cells { width: 120px; }
.g-edit { width: 150px; }
.g-add { width: 57px; }
.collapse { flex: 1; height: 82px; background: #fff; border-bottom: 1px solid #ccc; border-radius: 0 6px 6px 0; justify-content: flex-end; align-items: flex-end; padding: 0 6px 6px 0; }
.body { display: flex; }
.rows { display: flex; flex-direction: column; gap: 6px; padding-top: 4px; }
.row { display: flex; align-items: center; height: 20px; }
.cap { display: flex; justify-content: center; align-items: center; font-size: 9px; line-height: 12px; padding-right: 18px; }
.g-style .cap, .g-cells .cap, .g-edit .cap, .g-add .cap { padding-right: 6px; }
.cap .i8 { position: absolute; right: 3px; bottom: 3px; }
.w22 { width: 22px; }
.w34 { width: 34px; height: 20px; }
.fc { margin-left: 1px; font-size: 11px; }
.box { width: 20px; height: 20px; border: 1px solid #aaa; border-radius: 3px; background: #eee; }
.ghost { border-color: transparent; background: none; }
.box + .box { margin-left: 2px; }
.wide { width: 84px; background: #e9e9e9; }
.pad { padding-left: 3px; }
.bold { font-size: 12px; font-weight: 700; }
.ital { font-style: italic; font-size: 12px; }
.lat { font-size: 13px; gap: 0; }
.hat { align-self: flex-start; }
.pct { font-size: 14px; }
.comma { font-family: "Liberation Serif", serif; font-weight: 700; font-size: 26px; line-height: 8px; padding-bottom: 14px; }
.dec { width: 20px; flex-direction: column; align-items: flex-end; gap: 0; font-size: 8px; line-height: 9px; }
.dec .up { display: flex; align-items: center; }
.sep { width: 1px; height: 20px; background: #ddd; margin: 0 1px; }
.tall { height: 56px; margin: 0 4px; }
.sel { display: grid; align-items: center; height: 20px; border: 1px solid #aaa; border-radius: 3px; background: #fff; }
.sel + .sel { margin-left: 2px; margin-right: 2px; }
.sel select, .sel svg { grid-area: 1 / 1; }
.sel select { appearance: none; width: 100%; padding-left: 1px; }
.sel svg { justify-self: end; margin-right: 1px; pointer-events: none; }
.w97 { width: 97px; }
.w41 { width: 41px; }
.w120 { width: 120px; }
.big { display: flex; flex-direction: column; align-items: center; padding: 1px 0 0; line-height: 13px; white-space: nowrap; }
.big > svg:first-child { margin-bottom: 4px; }
.big span .i8 { display: inline-block; margin-left: 2px; }
.paste { width: 24px; height: 26px; }
.g-pano .big { width: 42px; }
.g-pano .stack { margin-left: 2px; }
.stack { display: flex; flex-direction: column; gap: 7px; align-items: flex-start; }
.g-style .big:nth-child(1) { width: 76px; }
.g-style .big:nth-child(2) { width: 68px; }
.g-style .big:nth-child(3) { width: 38px; }
.g-cells .big { width: 36px; }
.g-edit .stack { margin-left: 4px; }
.g-edit .big:nth-child(2) { width: 76px; }
.g-edit .big:nth-child(3) { width: 30px; }
.g-add .big { width: 45px; }

/* formula bar */
.fbar { height: 32px; display: flex; align-items: center; padding: 0 9px 0 7px; background: linear-gradient(90deg, #edebe7, #e9ebeb 50%, #e5eaee); font-family: "Liberation Sans", sans-serif; font-size: 12px; color: #222; }
.fbar label, .fx { height: 18px; background: #fff; display: flex; align-items: center; border-radius: 2px; }
.namebox { width: 84px; padding: 0 3px 0 4px; }
.fbar input { flex: 1; min-width: 0; outline: 0; }
.dots { width: 4px; height: 12px; margin: 0 7px; }
.fx { width: 60px; gap: 8px; padding-left: 5px; }
.fx em { font: italic 16px/16px "Liberation Serif", serif; }
.formula { flex: 1; margin-left: 4px; padding: 0 2px 0 9px; }

/* sheet */
.sheet { display: flex; background: #f0f0f0; overflow: hidden; border-bottom: 1px solid #9c8a20; }
.grid { flex: 1; width: 0; table-layout: fixed; border-collapse: separate; border-spacing: 0; font-family: Lato, sans-serif; font-weight: 700; color: #15110a; }
.c0 { width: 17px; } .ca { width: 80px; } .cb { width: 86px; } .cc { width: 90px; } .cd { width: 83px; } .ce { width: 89px; } .cf { width: 96px; } .cg { width: 84px; } .ch { width: 86px; } .ci { width: 103px; } .cj { width: 92px; } .ck { width: 86px; } .cl { width: 88px; } .cm { width: 128px; }
.grid th { padding: 0; font: 400 9px/12px "Open Sans", sans-serif; color: #555; background: #efefef; }
thead th { height: 12px; border-right: 1px solid #ddd; }
thead .cur { background: #dcdcdc; }
.grid thead .corner { background: linear-gradient(135deg, #efefef 70%, #d4d4d4 70%); }
tbody th { vertical-align: bottom; border-bottom: 1px solid #ccc !important; }
.grid td { padding: 0; border-right: 1px solid #0a2a2ac0; border-bottom: 1px solid #0a2a2ac0; position: relative; }
.grid td.nb { border-right: 0; }
.grid td > div { overflow: hidden; padding: 0 0 0 3px; white-space: nowrap; display: grid; font-size: 12px; line-height: 19px; align-content: start; }
.grid .lg > div { font-size: 13px; }
.r1 div { height: 88px; } .r2 div { height: 33px; } .r3 div, .r4 div, .r7 div { height: 52px; } .r5 div { height: 53px; } .r6 div { height: 47px; } .r8 div { height: 57px; }
.grid .r1 td { border-bottom-color: #88888880; }
.grid .ctr > div { text-align: center; padding: 0; justify-content: center; }
.grid .mid > div, .grid .mid td > div { align-content: center; }
.grid .mid .top > div { align-content: start; }
.grid .mid .bot > div { align-content: end; }
.grid .n17 td > div { font-size: 17px; line-height: 24px; padding-top: 1px; }
.grid .n18 td > div { font-size: 18px; line-height: 25px; }
.grid .n18 .up17 > div { font-size: 17px; }
.grid .n18 .t14 > div { font-size: 14px; line-height: 19px; }
.grid .n18 .t13 > div { font-size: 12px; line-height: 19px; }
.grid .n18 .t17 > div { line-height: 17px; }
.grid .n18 .t12 > div { font-size: 12px; line-height: 16px; }
.grid .n18 .t11 > div { font-size: 11px; line-height: 16px; }
.grid .n18 .t10 > div { font-size: 10px; line-height: 14px; padding-left: 1px; }
.grid .n18 .vid > div { line-height: 22px; font-size: 16px; }
.grid .kod > div { font: 700 21px/24px "Liberation Sans", sans-serif; padding-top: 2px; }
.grid .akb > div { font: 700 19px/24px "Liberation Sans", sans-serif; }
.picked { box-shadow: inset 0 0 0 1px #d8f0e0; }
.cursor { position: absolute; left: 49px; top: 33px; width: 12px; height: 12px; }
.dred { background: #b10404; } .yel { background: #ffff02; } .gry { background: #bfbfbf; } .lime { background: #93e053; } .blu { background: #0b75bb; } .cya { background: #0fbeec; } .sky { background: #12b4f8; } .gld { background: #f5c60b; } .grn { background: #12cb51; } .crm { background: #fcf1d0; } .blk { background: #000; } .wht { background: #fff; } .mgry { background: #a3a3a3; }
.grid .red { background: #ea0303; color: #6a0000; }
.grid .w, .w { color: #e6fbff; }
.grid .blk { color: #fff; border-right-color: #000; }
.grid .ice { color: #bfeaff; }
.grid .neg { color: #6a1408; }
.frz { background-image: linear-gradient(#80a0b070, #80a0b070); background-size: 1px 100%; background-position: 79px 0; background-repeat: no-repeat; }
.vscroll { width: 17px; display: flex; flex-direction: column; align-items: center; padding: 3px 0 1px; background: #f3f3f3; }
.vscroll i { width: 7px; height: 83px; margin: 3px 0 auto; border-radius: 4px; background: #6a6a6a; }

/* sheet tabs */
.sheets { height: 27px; display: flex; align-items: center; padding: 0 17px 0 11px; background: linear-gradient(90deg, #e8e4e2, #e4e8ea); font-size: 11px; }
.arrow { width: 27px; }
.st { height: 20px; padding: 0 8px; margin-right: 7px; border-radius: 3px; white-space: nowrap; }
.s1 { margin-left: 27px; }
.active { height: 25px; align-self: flex-start; background: linear-gradient(#fffef0, #f6f3b8); font-weight: 600; }
.active span { display: block; border-bottom: 2px solid #4c8a30; line-height: 17px; }
.last { width: 36px; padding-right: 0; overflow: hidden; margin-right: 0; }
.more { width: 26px; font-size: 8px; }
.plus { width: 26px; }
.sheets .dots { margin: 0 11px 0 13px; }
.hscroll { flex: 1; height: 14px; display: flex; align-items: center; gap: 3px; padding: 0 3px 0 2px; background: #f3f3f3; border-radius: 7px; }
.hscroll i { width: 18px; height: 7px; border-radius: 4px; background: #666; margin-right: auto; }

/* status bar */
.status { height: 18px; display: flex; align-items: center; padding: 0 11px 0 9px; background: #f3f3f3; font-size: 9px; white-space: nowrap; }
.ready { margin-right: 15px; }
.status b { margin-left: 3px; color: #222; font-weight: 600; }
.views { margin-left: auto; display: flex; }
.views .ib { width: 33px; height: 18px; }
.views .on { background: #ddd; }
.zb { width: 14px; font-size: 12px; line-height: 12px; }
.zoom { appearance: none; width: 86px; height: 12px; background: linear-gradient(#888, #888) center / 100% 1px no-repeat; }
.zoom::-webkit-slider-thumb { appearance: none; width: 4px; height: 9px; background: #555; }
.pc { margin-left: 6px; }
```
